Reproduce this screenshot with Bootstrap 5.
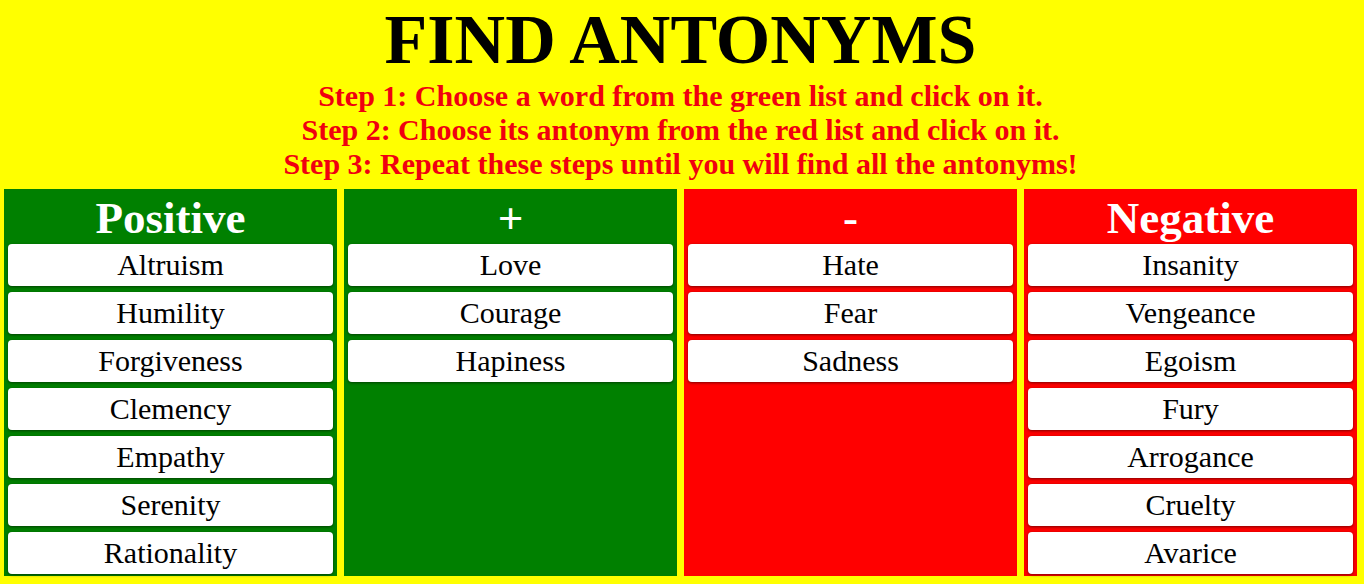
<!DOCTYPE html>
<html lang="en">
<head>
<meta charset="utf-8">
<meta name="viewport" content="width=device-width, initial-scale=1">
<title>Find Antonyms</title>
<link href="https://cdn.jsdelivr.net/npm/bootstrap@5.3.0/dist/css/bootstrap.min.css" rel="stylesheet">
<style>
  body { background: #ff0; color: #000; font-family: "Liberation Serif", "Times New Roman", serif; }
  .game { padding: 0 7px 8px 4px; }
  .game-title { font-size: 70px; line-height: 79px; font-weight: 700; }
  .steps { color: #f00010; font-size: 30px; line-height: 34px; font-weight: 700; }
  .columns { display: grid; grid-template-columns: repeat(4, 1fr); gap: 7px; }
  .word-column { padding: 3px 4px 2px; }
  .positive { background: #008000; }
  .negative { background: #f00; }
  .column-title { font-size: 45px; line-height: 52px; font-weight: 700; color: #fff; }
  .word { height: 42px; padding: 0; border: 0; border-radius: 4px; background: #fff; color: #000; font-size: 30px; line-height: 42px; box-shadow: 0 1px 3px rgba(0, 0, 0, .5); }
  .word:hover { background: #eee; }
  .word-list { gap: 6px; }
</style>
</head>
<body>
<main class="game text-center">
  <header>
    <h1 class="game-title m-0">FIND ANTONYMS</h1>
    <div class="steps">
      <p class="m-0">Step 1: Choose a word from the green list and click on it.</p>
      <p class="m-0">Step 2: Choose its antonym from the red list and click on it.</p>
      <p class="m-0">Step 3: Repeat these steps until you will find all the antonyms!</p>
    </div>
  </header>
  <div class="columns mt-2">
    <section class="word-column positive">
      <h2 class="column-title m-0">Positive</h2>
      <div class="word-list d-flex flex-column">
        <button type="button" class="word btn">Altruism</button>
        <button type="button" class="word btn">Humility</button>
        <button type="button" class="word btn">Forgiveness</button>
        <button type="button" class="word btn">Clemency</button>
        <button type="button" class="word btn">Empathy</button>
        <button type="button" class="word btn">Serenity</button>
        <button type="button" class="word btn">Rationality</button>
      </div>
    </section>
    <section class="word-column positive">
      <h2 class="column-title m-0">+</h2>
      <div class="word-list d-flex flex-column">
        <button type="button" class="word btn">Love</button>
        <button type="button" class="word btn">Courage</button>
        <button type="button" class="word btn">Hapiness</button>
      </div>
    </section>
    <section class="word-column negative">
      <h2 class="column-title m-0">-</h2>
      <div class="word-list d-flex flex-column">
        <button type="button" class="word btn">Hate</button>
        <button type="button" class="word btn">Fear</button>
        <button type="button" class="word btn">Sadness</button>
      </div>
    </section>
    <section class="word-column negative">
      <h2 class="column-title m-0">Negative</h2>
      <div class="word-list d-flex flex-column">
        <button type="button" class="word btn">Insanity</button>
        <button type="button" class="word btn">Vengeance</button>
        <button type="button" class="word btn">Egoism</button>
        <button type="button" class="word btn">Fury</button>
        <button type="button" class="word btn">Arrogance</button>
        <button type="button" class="word btn">Cruelty</button>
        <button type="button" class="word btn">Avarice</button>
      </div>
    </section>
  </div>
</main>
<script src="https://cdn.jsdelivr.net/npm/bootstrap@5.3.0/dist/js/bootstrap.bundle.min.js"></script>
</body>
</html>
